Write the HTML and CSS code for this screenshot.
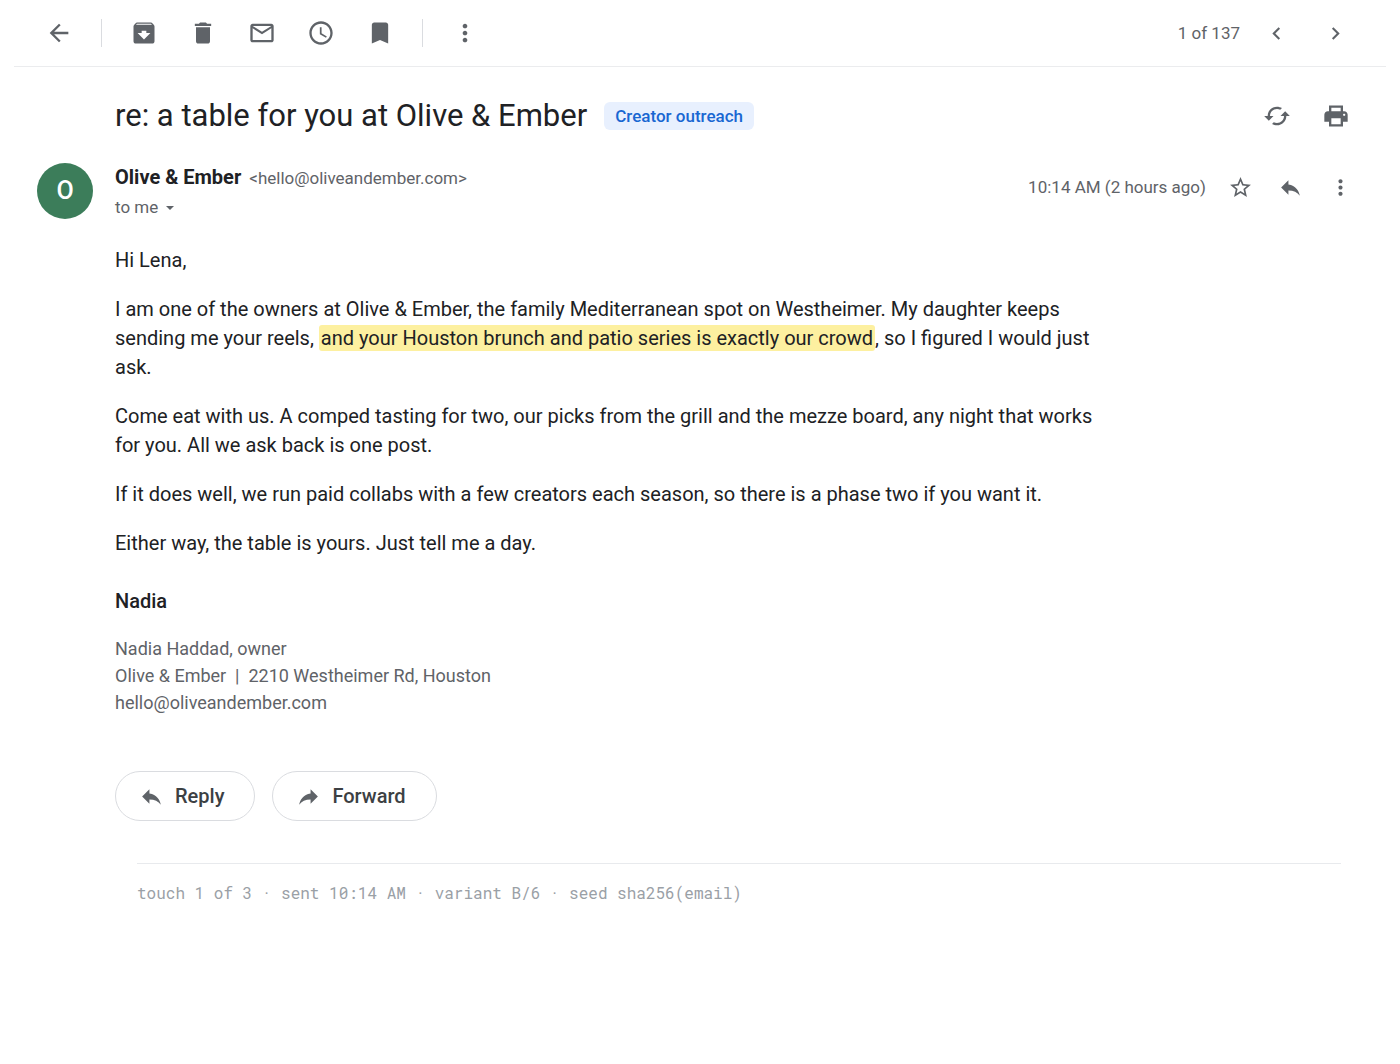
FILE: index.html
```html
<!DOCTYPE html>
<html lang="en">
<head>
<meta charset="utf-8">
<meta name="viewport" content="width=device-width, initial-scale=1">
<title>re: a table for you at Olive &amp; Ember</title>
<link rel="stylesheet" href="styles.css">
</head>
<body>
<header class="toolbar">
  <button class="icon-btn" type="button" aria-label="Back"><svg class="icon" viewBox="0 0 24 24"><path d="M20 11H7.830l5.590-5.590L12 4l-8 8 8 8 1.410-1.410L7.830 13H20v-2z"/></svg></button>
  <span class="divider"></span>
  <button class="icon-btn" type="button" aria-label="Archive"><svg class="icon" viewBox="0 0 24 24"><path fill-rule="evenodd" d="M20.540 5.230l-1.390-1.680C18.880 3.210 18.470 3 18 3H6c-.47 0-.88.21-1.160.55L3.460 5.230C3.170 5.570 3 6.020 3 6.500V19c0 1.100.9 2 2 2h14c1.100 0 2-.9 2-2V6.500c0-.48-.17-.93-.46-1.270zM12 17.500L6.500 12H10v-2h4v2h3.500L12 17.500zM5.120 5l.81-1h12l.94 1H5.120z"/></svg></button>
  <button class="icon-btn" type="button" aria-label="Delete"><svg class="icon" viewBox="0 0 24 24"><path d="M6 19c0 1.100.9 2 2 2h8c1.100 0 2-.9 2-2V7H6v12zM19 4h-3.500l-1-1h-5l-1 1H5v2h14V4z"/></svg></button>
  <button class="icon-btn" type="button" aria-label="Mark as unread"><svg class="icon" viewBox="0 0 24 24"><path d="M20 4H4c-1.100 0-1.990.9-1.990 2L2 18c0 1.100.9 2 2 2h16c1.100 0 2-.9 2-2V6c0-1.100-.9-2-2-2zm0 14H4V8l8 5 8-5v10zm-8-7L4 6h16l-8 5z"/></svg></button>
  <button class="icon-btn" type="button" aria-label="Snooze"><svg class="icon" viewBox="0 0 24 24"><path d="M11.990 2C6.470 2 2 6.480 2 12s4.470 10 9.990 10C17.520 22 22 17.520 22 12S17.520 2 11.990 2zM12 20c-4.420 0-8-3.580-8-8s3.580-8 8-8 8 3.580 8 8-3.580 8-8 8zm.5-13H11v6l5.250 3.150.75-1.230-4.500-2.670z"/></svg></button>
  <button class="icon-btn" type="button" aria-label="Label"><svg class="icon" viewBox="0 0 24 24"><path d="M17 3H7c-1.100 0-1.990.9-1.990 2L5 21l7-3 7 3V5c0-1.100-.9-2-2-2z"/></svg></button>
  <span class="divider"></span>
  <button class="icon-btn" type="button" aria-label="More"><svg class="icon" viewBox="0 0 24 24"><path d="M12 8c1.100 0 2-.9 2-2s-.9-2-2-2-2 .9-2 2 .9 2 2 2zm0 2c-1.100 0-2 .9-2 2s.9 2 2 2 2-.9 2-2-.9-2-2-2zm0 6c-1.100 0-2 .9-2 2s.9 2 2 2 2-.9 2-2-.9-2-2-2z"/></svg></button>
  <span class="count">1 of 137</span>
  <button class="icon-btn" type="button" aria-label="Newer"><svg class="icon small" viewBox="0 0 24 24"><path d="M15.410 7.410L14 6l-6 6 6 6 1.410-1.410L10.830 12z"/></svg></button>
  <button class="icon-btn" type="button" aria-label="Older"><svg class="icon small" viewBox="0 0 24 24"><path d="M10 6L8.590 7.410 13.170 12l-4.580 4.590L10 18l6-6z"/></svg></button>
</header>
<main class="message">
  <div class="subject-row">
    <h1 class="subject">re: a table for you at Olive &amp; Ember</h1>
    <span class="label">Creator outreach</span>
    <div class="subject-actions">
      <button class="icon-btn" type="button" aria-label="Refresh"><svg class="icon" viewBox="0 0 24 24"><path d="M19 8l-4 4h3c0 3.310-2.690 6-6 6-1.010 0-1.970-.25-2.800-.7l-1.460 1.460C8.970 19.540 10.430 20 12 20c4.420 0 8-3.580 8-8h3l-4-4zM6 12c0-3.310 2.690-6 6-6 1.010 0 1.970.25 2.800.7l1.460-1.460C15.030 4.460 13.570 4 12 4c-4.420 0-8 3.580-8 8H1l4 4 4-4H6z"/></svg></button>
      <button class="icon-btn" type="button" aria-label="Print"><svg class="icon" viewBox="0 0 24 24"><path fill-rule="evenodd" d="M19 8H5c-1.660 0-3 1.340-3 3v6h4v4h12v-4h4v-6c0-1.660-1.340-3-3-3zm-3 11H8v-5h8v5zm3-7c-.55 0-1-.45-1-1s.45-1 1-1 1 .45 1 1-.45 1-1 1zM6 3h12v5h-2V5H8v3H6z"/></svg></button>
    </div>
  </div>
  <div class="sender-row">
    <div class="avatar">O</div>
    <div class="sender">
      <div class="from"><span class="name">Olive &amp; Ember</span><span class="address">&lt;hello@oliveandember.com&gt;</span></div>
      <button class="recipient" type="button">to me<span class="caret"></span></button>
    </div>
    <div class="meta">
      <span class="time">10:14 AM (2 hours ago)</span>
      <button class="icon-btn narrow" type="button" aria-label="Star"><svg class="icon small" viewBox="0 0 24 24"><path d="M22 9.240l-7.190-.62L12 2 9.190 8.630 2 9.240l5.460 4.730L5.820 21 12 17.270 18.180 21l-1.630-7.030L22 9.240zM12 15.400l-3.760 2.270 1-4.280-3.320-2.880 4.380-.38L12 6.100l1.710 4.040 4.380.38-3.320 2.880 1 4.280L12 15.400z"/></svg></button>
      <button class="icon-btn narrow" type="button" aria-label="Reply to message"><svg class="icon small" viewBox="0 0 24 24"><path d="M10 9V5l-7 7 7 7v-4.100c5 0 8.500 1.600 11 5.100-1-5-4-10-11-11z"/></svg></button>
      <button class="icon-btn narrow" type="button" aria-label="More options"><svg class="icon small" viewBox="0 0 24 24"><path d="M12 8c1.100 0 2-.9 2-2s-.9-2-2-2-2 .9-2 2 .9 2 2 2zm0 2c-1.100 0-2 .9-2 2s.9 2 2 2 2-.9 2-2-.9-2-2-2zm0 6c-1.100 0-2 .9-2 2s.9 2 2 2 2-.9 2-2-.9-2-2-2z"/></svg></button>
    </div>
  </div>
  <article class="body">
    <p>Hi Lena,</p>
    <p>I am one of the owners at Olive &amp; Ember, the family Mediterranean spot on Westheimer. My daughter keeps sending me your reels, <mark>and your Houston brunch and patio series is exactly our crowd</mark>, so I figured I would just ask.</p>
    <p>Come eat with us. A comped tasting for two, our picks from the grill and the mezze board, any night that works for you. All we ask back is one post.</p>
    <p>If it does well, we run paid collabs with a few creators each season, so there is a phase two if you want it.</p>
    <p>Either way, the table is yours. Just tell me a day.</p>
    <p class="signoff">Nadia</p>
    <address class="signature">Nadia Haddad, owner<br>Olive &amp; Ember &nbsp;|&nbsp; 2210 Westheimer Rd, Houston<br>hello@oliveandember.com</address>
  </article>
  <div class="actions">
    <button class="pill" type="button"><svg class="icon small" viewBox="0 0 24 24"><path d="M10 9V5l-7 7 7 7v-4.100c5 0 8.500 1.600 11 5.100-1-5-4-10-11-11z"/></svg>Reply</button>
    <button class="pill" type="button"><svg class="icon small" viewBox="0 0 24 24"><path d="M14 9V5l7 7-7 7v-4.100c-5 0-8.500 1.600-11 5.100 1-5 4-10 11-11z"/></svg>Forward</button>
  </div>
</main>
<footer class="trace">touch 1 of 3 · sent 10:14 AM · variant B/6 · seed sha256(email)</footer>
</body>
</html>
```
FILE: styles.css
```css
* { box-sizing: border-box; }

body {
  margin: 0;
  background: #fff;
  color: #202124;
  font-family: Roboto, "Liberation Sans", sans-serif;
  font-size: 20px;
  line-height: 29px;
}

button {
  margin: 0;
  padding: 0;
  border: 0;
  background: none;
  color: inherit;
  font: inherit;
  cursor: pointer;
}

.icon { display: block; width: 28px; height: 28px; fill: #5f6368; }
.icon.small { width: 25px; height: 25px; }

.icon-btn {
  display: flex;
  align-items: center;
  justify-content: center;
  flex: none;
  width: 59px;
  height: 48px;
}
.icon-btn.narrow { width: 50px; }

.toolbar {
  display: flex;
  align-items: center;
  height: 67px;
  margin: 0 14px;
  padding: 0 21px 0 15px;
  border-bottom: 1px solid #ebecee;
}
.divider { width: 1px; height: 28px; margin: 0 12px 0 13px; background: #dadce0; }
.count { margin-left: auto; padding-right: 7px; color: #5f6368; font-size: 17px; }

.message { padding: 25px 35px 0 115px; }

.subject-row { display: flex; align-items: center; height: 47px; }
.subject { margin: 0; font-size: 31px; font-weight: 400; line-height: 40px; }
.label {
  margin-left: 17px;
  padding: 0 11px;
  border-radius: 6px;
  background: #e8f0fe;
  color: #1967d2;
  font-size: 17px;
  font-weight: 500;
  line-height: 28px;
}
.subject-actions { display: flex; margin-left: auto; }

.sender-row { display: flex; align-items: flex-start; margin: 24px 0 0 -78px; }
.avatar {
  flex: none;
  width: 56px;
  height: 56px;
  margin-right: 22px;
  border-radius: 50%;
  background: #3c7d5a;
  color: #fff;
  font-size: 25px;
  font-weight: 500;
  line-height: 56px;
  text-align: center;
}
.from { display: flex; align-items: baseline; }
.name { font-weight: 700; }
.address { margin-left: 8px; color: #5f6368; font-size: 17px; }
.recipient { display: flex; align-items: center; color: #5f6368; font-size: 17px; }
.caret {
  margin-left: 8px;
  border: 4px solid transparent;
  border-top-color: #5f6368;
  border-bottom: 0;
}
.meta { display: flex; align-items: center; margin-left: auto; }
.time { margin-right: 9px; color: #5f6368; font-size: 17px; }

.body { max-width: 980px; margin-top: 24px; }
.body p { margin: 0 0 20px; }
.body mark { padding: 1px 2px; border-radius: 3px; background: #fdf0a0; color: inherit; }
.body .signoff { margin: 29px 0 19px; font-weight: 500; }
.signature { color: #5f6368; font-size: 18px; font-style: normal; line-height: 27px; }

.actions { display: flex; gap: 17px; margin-top: 55px; }
.pill {
  display: flex;
  align-items: center;
  height: 50px;
  padding: 0 30px 0 23px;
  border: 1px solid #dadce0;
  border-radius: 25px;
  color: #3c4043;
  font-weight: 500;
}
.pill .icon { margin-right: 11px; }

.trace {
  margin: 42px 59px 0 137px;
  padding-top: 14px;
  border-top: 1px solid #e8eaed;
  color: #9aa0a6;
  font-family: "Roboto Mono", "Liberation Mono", monospace;
  font-size: 16px;
}
```
